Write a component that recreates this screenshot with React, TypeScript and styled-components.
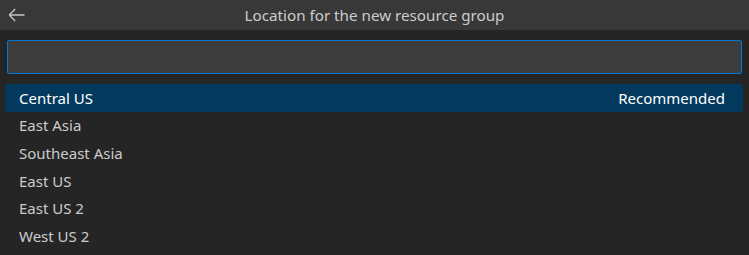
import { createGlobalStyle } from 'styled-components';
import styled from 'styled-components';

const GlobalStyle = createGlobalStyle`
  html, body {
    margin: 0;
    padding: 0;
    background: #252526;
  }
  body {
    font-family: "Noto Sans", "Open Sans", sans-serif;
    font-size: 15px;
    color: #cccccc;
  }
`;

interface Location {
  name: string;
  detail?: string;
}

const locations: Location[] = [
  { name: 'Central US', detail: 'Recommended' },
  { name: 'East Asia' },
  { name: 'Southeast Asia' },
  { name: 'East US' },
  { name: 'East US 2' },
  { name: 'West US 2' },
];

export default function App() {
  return (
    <>
      <GlobalStyle />
      <QuickPick>
        <TitleBar>
          <BackButton aria-label="Back">
            <svg width="17" height="14" viewBox="0 0 17 14" fill="none">
              <path d="M1.2 7H16.5M1.2 7L7.2 1M1.2 7L7.2 13" stroke="#c5c5c5" strokeWidth="1.3" />
            </svg>
          </BackButton>
          <Title>Location for the new resource group</Title>
        </TitleBar>
        <InputRow>
          <Input />
        </InputRow>
        <List>
          {locations.map((loc, i) => (
            <Row key={loc.name} $active={i === 0}>
              <span>{loc.name}</span>
              {loc.detail && <Detail>{loc.detail}</Detail>}
            </Row>
          ))}
        </List>
      </QuickPick>
    </>
  );
}

// Styles
const QuickPick = styled.div`
  width: 749px;
  height: 255px;
  background: #252526;
  display: flex;
  flex-direction: column;
  overflow: hidden;
`;

const TitleBar = styled.div`
  position: relative;
  height: 30px;
  background: #383838;
  display: flex;
  align-items: center;
  justify-content: center;
`;

const BackButton = styled.div`
  position: absolute;
  left: 8px;
  top: 8px;
  display: flex;
`;

const Title = styled.div`
  color: #cccccc;
  font-size: 15.2px;
  line-height: 30px;
`;

const InputRow = styled.div`
  padding: 10px 7px 10px 7px;
`;

const Input = styled.div`
  height: 32px;
  background: #3c3c3c;
  border: 1px solid #0078d4;
  border-radius: 2px;
`;

const List = styled.div`
  padding: 0 6px 0 5px;
  display: flex;
  flex-direction: column;
`;

const Row = styled.div<{ $active?: boolean }>`
  height: 27.6px;
  display: flex;
  align-items: center;
  justify-content: space-between;
  padding: 0 18px 0 14px;
  border-radius: 3px;
  background: ${(p) => (p.$active ? '#04395e' : 'transparent')};
  color: ${(p) => (p.$active ? '#ffffff' : '#cccccc')};
`;

const Detail = styled.span`
  color: #ffffff;
`;
